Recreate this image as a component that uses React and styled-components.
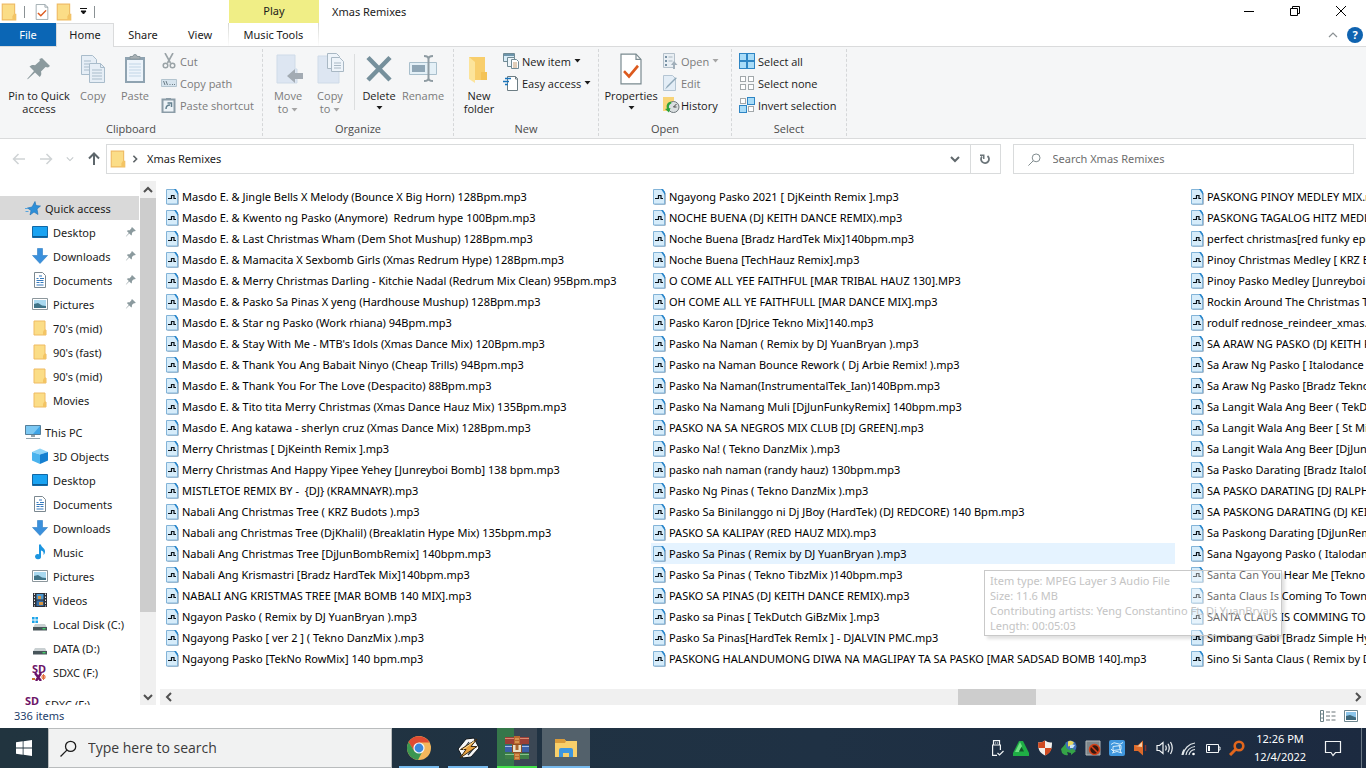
/** @format */

import React from "react";
import styled, { createGlobalStyle } from "styled-components";

const firstColumn = [
  "Masdo E. & Jingle Bells X Melody (Bounce X Big Horn) 128Bpm.mp3",
  "Masdo E. & Kwento ng Pasko (Anymore)  Redrum hype 100Bpm.mp3",
  "Masdo E. & Last Christmas Wham (Dem Shot Mushup) 128Bpm.mp3",
  "Masdo E. & Mamacita X Sexbomb Girls (Xmas Redrum Hype) 128Bpm.mp3",
  "Masdo E. & Merry Christmas Darling - Kitchie Nadal (Redrum Mix Clean) 95Bpm.mp3",
  "Masdo E. & Pasko Sa Pinas X yeng (Hardhouse Mushup) 128Bpm.mp3",
  "Masdo E. & Star ng Pasko (Work rhiana) 94Bpm.mp3",
  "Masdo E. & Stay With Me - MTB's Idols (Xmas Dance Mix) 120Bpm.mp3",
  "Masdo E. & Thank You Ang Babait Ninyo (Cheap Trills) 94Bpm.mp3",
  "Masdo E. & Thank You For The Love (Despacito) 88Bpm.mp3",
  "Masdo E. & Tito tita Merry Christmas (Xmas Dance Hauz Mix) 135Bpm.mp3",
  "Masdo E. Ang katawa - sherlyn cruz (Xmas Dance Mix) 128Bpm.mp3",
  "Merry Christmas [ DjKeinth Remix ].mp3",
  "Merry Christmas And Happy Yipee Yehey [Junreyboi Bomb] 138 bpm.mp3",
  "MISTLETOE REMIX BY -  {DJ} (KRAMNAYR).mp3",
  "Nabali Ang Christmas Tree ( KRZ Budots ).mp3",
  "Nabali ang Christmas Tree (DjKhalil) (Breaklatin Hype Mix) 135bpm.mp3",
  "Nabali Ang Christmas Tree [DjJunBombRemix] 140bpm.mp3",
  "Nabali Ang Krismastri [Bradz HardTek Mix]140bpm.mp3",
  "NABALI ANG KRISTMAS TREE [MAR BOMB 140 MIX].mp3",
  "Ngayon Pasko ( Remix by DJ YuanBryan ).mp3",
  "Ngayong Pasko [ ver 2 ] ( Tekno DanzMix ).mp3",
  "Ngayong Pasko [TekNo RowMix] 140 bpm.mp3",
];

const secondColumn = [
  "Ngayong Pasko 2021 [ DjKeinth Remix ].mp3",
  "NOCHE BUENA (DJ KEITH DANCE REMIX).mp3",
  "Noche Buena [Bradz HardTek Mix]140bpm.mp3",
  "Noche Buena [TechHauz Remix].mp3",
  "O COME ALL YEE FAITHFUL [MAR TRIBAL HAUZ 130].MP3",
  "OH COME ALL YE FAITHFULL [MAR DANCE MIX].mp3",
  "Pasko Karon [DJrice Tekno Mix]140.mp3",
  "Pasko Na Naman ( Remix by DJ YuanBryan ).mp3",
  "Pasko na Naman Bounce Rework ( Dj Arbie Remix! ).mp3",
  "Pasko Na Naman(InstrumentalTek_Ian)140Bpm.mp3",
  "Pasko Na Namang Muli [DjJunFunkyRemix] 140bpm.mp3",
  "PASKO NA SA NEGROS MIX CLUB [DJ GREEN].mp3",
  "Pasko Na! ( Tekno DanzMix ).mp3",
  "pasko nah naman (randy hauz) 130bpm.mp3",
  "Pasko Ng Pinas ( Tekno DanzMix ).mp3",
  "Pasko Sa Binilanggo ni Dj JBoy (HardTek) (DJ REDCORE) 140 Bpm.mp3",
  "PASKO SA KALIPAY (RED HAUZ MIX).mp3",
  "Pasko Sa Pinas ( Remix by DJ YuanBryan ).mp3",
  "Pasko Sa Pinas ( Tekno TibzMix )140bpm.mp3",
  "PASKO SA PINAS (DJ KEITH DANCE REMIX).mp3",
  "Pasko sa Pinas [ TekDutch GiBzMix ].mp3",
  "Pasko Sa Pinas[HardTek RemIx ] - DJALVIN PMC.mp3",
  "PASKONG HALANDUMONG DIWA NA MAGLIPAY TA SA PASKO [MAR SADSAD BOMB 140].mp3",
];

const thirdColumn = [
  "PASKONG PINOY MEDLEY MIX.mp3",
  "PASKONG TAGALOG HITZ MEDLEY.mp3",
  "perfect christmas[red funky epic].mp3",
  "Pinoy Christmas Medley [ KRZ Budots ].mp3",
  "Pinoy Pasko Medley [Junreyboi Bomb].mp3",
  "Rockin Around The Christmas Tree.mp3",
  "rodulf rednose_reindeer_xmas.mp3",
  "SA ARAW NG PASKO (DJ KEITH REMIX).mp3",
  "Sa Araw Ng Pasko [ Italodance ].mp3",
  "Sa Araw Ng Pasko [Bradz Tekno].mp3",
  "Sa Langit Wala Ang Beer ( TekDutch ).mp3",
  "Sa Langit Wala Ang Beer [ St Mix ].mp3",
  "Sa Langit Wala Ang Beer [DjJunRemix].mp3",
  "Sa Pasko Darating [Bradz ItaloDance].mp3",
  "SA PASKO DARATING [DJ RALPH].mp3",
  "SA PASKONG DARATING (DJ KEITH).mp3",
  "Sa Paskong Darating [DjJunRemix].mp3",
  "Sana Ngayong Pasko ( Italodance ).mp3",
  "Santa Can You Hear Me [Tekno Mix].mp3",
  "Santa Claus Is Coming To Town.mp3",
  "SANTA CLAUS IS COMMING TO TOWN.mp3",
  "Simbang Gabi [Bradz Simple Hype].mp3",
  "Sino Si Santa Claus ( Remix by DJ YuanBryan ).mp3",
];

const HOVERED_FILE = secondColumn[17];

/* ---------- icons ---------- */

const FolderIcon = ({ size = 16 }) => (
  <svg width={size} height={size} viewBox="0 0 16 16">
    <path d="M2 1h11v9h1v5H2z" fill="#fbdd87" stroke="#efbb62" />
    <path d="M12 10h2v5h-3v-3z" fill="#f3c464" />
  </svg>
);

const CheckDocIcon = ({ width = 16, height = 16 }) => (
  <svg width={width} height={height} viewBox="0 0 24 30" preserveAspectRatio="none">
    <path d="M2 1h15l5 5v23H2z" fill="#fff" stroke="#7a8a90" strokeWidth="1.2" />
    <path d="M17 1v5h5" fill="none" stroke="#7a8a90" strokeWidth="1.2" />
    <path d="M5 17l5 5 9-10" fill="none" stroke="#dc5a1e" strokeWidth="2.6" />
  </svg>
);

const CaretIcon = ({ color = "#1b1b1b" }) => (
  <svg width="7" height="4" viewBox="0 0 7 4">
    <path d="M0.5 0h6L3.5 3.5z" fill={color} />
  </svg>
);

const PinIcon = ({ size = 32, color = "#8b9a9e" }) => (
  <svg width={size} height={size} viewBox="0 0 32 32">
    <path
      d="M19 5l8 8-2 1.500-2.500-.5-4.500 4.500c.7 2.500.2 4-1.200 5.500L12 19.500 5 26l-.8.300.3-.8L11 18 6.500 13.500c1.500-1.600 3.300-2 5.500-1.200L16.800 8l-.3-2z"
      fill={color}
    />
  </svg>
);

const CopyIcon = () => (
  <svg width="32" height="32" viewBox="0 0 32 32">
    <g fill="#e6eef6" stroke="#a9bccb">
      <path d="M4.500 2.500h11l4 4v15h-15z" />
      <path d="M12.500 10.500h11l4 4v15h-15z" />
      <path d="M23.500 10.500v4h4M7 8h7M7 11h5M7 14h5M7 17h5M15 17h10M15 20h10M15 23h10M15 26h10" fill="none" />
    </g>
  </svg>
);

const PasteIcon = () => (
  <svg width="32" height="32" viewBox="0 0 32 32">
    <path d="M6 4h20v26H6z" fill="#8fa3b1" />
    <path d="M8 7h16v21H8z" fill="#edf4fb" />
    <path d="M11 6V3.500h3a2 2 0 0 1 4 0h3V6z" fill="#a7afb3" stroke="#8b989e" />
    <path d="M10 11h12M10 14h12M10 17h12M10 20h12M10 23h12" stroke="#c1d5e6" />
  </svg>
);

const CutIcon = () => (
  <svg width="16" height="16" viewBox="0 0 16 16" fill="none" stroke="#9aa3a7">
    <path d="M4 0l5.500 10M12 0L6.500 10" strokeWidth="1.600" />
    <circle cx="4.500" cy="12.500" r="2.300" strokeWidth="1.500" />
    <circle cx="11.500" cy="12.500" r="2.300" strokeWidth="1.500" />
  </svg>
);

const CopyPathIcon = () => (
  <svg width="16" height="16" viewBox="0 0 16 16">
    <path d="M.5 4.500h15v7H.5z" fill="#d6e4ee" stroke="#b3c4cf" />
    <path d="M2.500 6l1.500 4M5 6l1.500 4M8.500 9.500h1M11 9.500h1M13 9.500h1" stroke="#6b7c86" />
  </svg>
);

const PasteShortcutIcon = () => (
  <svg width="16" height="16" viewBox="0 0 16 16">
    <path d="M1.500 2.500h12v13h-12z" fill="#edf3f7" stroke="#8b9ca7" strokeWidth="2" />
    <path d="M5 1h5v2H5z" fill="#8b9ca7" />
    <path d="M5 12c0-3 1.500-4 4-4M6.500 6h4v4" fill="none" stroke="#63808f" strokeWidth="1.500" />
  </svg>
);

const MoveToIcon = () => (
  <svg width="32" height="32" viewBox="0 0 32 32">
    <path d="M5 2h18v14h2v14H5z" fill="#dde6f2" stroke="#cfdbe8" />
    <path d="M15 23l8-7v4h8v6h-8v4z" fill="#a3abb3" />
  </svg>
);

const CopyToIcon = () => (
  <svg width="32" height="32" viewBox="0 0 32 32">
    <path d="M4 3h19v14h2v13H4z" fill="#dde6f2" stroke="#cfdbe8" />
    <g fill="#eef4fa" stroke="#a9b8c4">
      <path d="M13.500.5h9l3 3v12h-12z" />
      <path d="M17.500 4.500h8l4 4v10h-12z" />
      <path d="M20 10h7M20 12.500h7M20 15h7" />
    </g>
  </svg>
);

const DeleteIcon = () => (
  <svg width="32" height="32" viewBox="0 0 32 32">
    <path d="M5 4.500L27 27M27 4.500L5 27" stroke="#76909c" strokeWidth="4.500" />
  </svg>
);

const RenameIcon = () => (
  <svg width="32" height="32" viewBox="0 0 32 32" fill="none">
    <path d="M2.500 9.500h27v12h-27z" fill="#e4f0f7" stroke="#a9bfcc" />
    <path d="M5 12h13v7H5z" fill="#8fa6b6" />
    <path d="M17 3c3 0 4.500 1 4.500 3v19c0 2-1.500 3-4.500 3M26 3c-3 0-4.500 1-4.500 3M21.500 25c0 2 1.500 3 4.500 3" stroke="#8f9ca3" strokeWidth="2" />
  </svg>
);

const NewFolderIcon = () => (
  <svg width="32" height="32" viewBox="0 0 32 32">
    <path d="M6 4h16v15h2v8H12L6 23z" fill="#f8ce6c" />
    <path d="M6 4l6 5v21l-6-4z" fill="#fce49b" />
    <path d="M18 19h6v8h-6z" fill="#f4c357" />
  </svg>
);

const NewItemIcon = () => (
  <svg width="16" height="16" viewBox="0 0 16 16">
    <path d="M.5.500h11v8H.5z" fill="#d8ecf7" stroke="#708a95" />
    <path d="M1 1h10v2H1z" fill="#6d95ab" />
    <path d="M4.500 4.500h7v9h-7z" fill="#eef6fa" stroke="#708a95" />
    <path d="M8.500 6.500h5l2 2v7h-7z" fill="#fff" stroke="#708a95" />
    <path d="M10 10h4M10 12h4M10 14h4" stroke="#b2844f" strokeWidth=".8" />
  </svg>
);

const EasyAccessIcon = () => (
  <svg width="16" height="16" viewBox="0 0 16 16">
    <path d="M4.500 1.500h8l2 2v12h-10z" fill="#fff" stroke="#6c7d84" />
    <path d="M12.500 1.500v2.500h2" fill="none" stroke="#6c7d84" />
    <path d="M2 3.500h6M0 6.500h6M2 9.500h3" stroke="#1874bb" strokeWidth="1.500" />
  </svg>
);

const OpenIcon = () => (
  <svg width="16" height="16" viewBox="0 0 16 16">
    <path d="M1.500.500h11v14h-11z" fill="#e9eff4" stroke="#b4c0ca" />
    <path d="M3 3h2v2H3zM3 7h2v2H3zM3 11h2v2H3z" fill="#7992a5" />
    <path d="M6.500 4h4M6.500 8h4" stroke="#a9b6c0" />
    <path d="M11 16v-4H9l3-4 3.500 4H13v4z" fill="#a1afba" />
  </svg>
);

const EditIcon = () => (
  <svg width="16" height="16" viewBox="0 0 16 16">
    <path d="M1.500.500h9l3 3v12h-12z" fill="#e3edf6" stroke="#b4c5d3" />
    <path d="M15 3L6 12l-3 2.500L5 11l8.500-8.500z" fill="#8ea7b8" />
  </svg>
);

const HistoryIcon = () => (
  <svg width="18" height="18" viewBox="0 0 18 18">
    <path d="M1 1h11v14H1z" fill="#f8d478" />
    <circle cx="11.500" cy="11" r="5.500" fill="#d9dee0" stroke="#6d777b" />
    <path d="M11.500 11l3-3M11.500 11h3" stroke="#444" />
    <path d="M9 5.500c-4 1-5 4-4 7l-2 .5 4 3.500 1.500-4.500-1.500.3c-.5-2 0-4 2.500-5z" fill="#2ba33c" />
  </svg>
);

const tiles = [
  [0.5, 0.5],
  [8.5, 0.5],
  [0.5, 8.5],
  [8.5, 8.5],
];

const SelectIcon = ({ filled }) => (
  <svg width="16" height="16" viewBox="0 0 16 16">
    {tiles.map(([x, y], i) =>
      filled.includes(i) ? (
        <rect key={i} x={x} y={y} width="7" height="7" fill="#a9dcf8" stroke="#2e85c4" />
      ) : (
        <rect key={i} x={x + 1} y={y + 1} width="5" height="5" fill="#fff" stroke="#a2a8ab" />
      )
    )}
  </svg>
);

const ChevronIcon = ({ turn = 0, size = 10, color = "#505050", weight = 2 }) => (
  <svg width={size} height={size} viewBox="0 0 10 10">
    <path
      d="M1 3l4 4 4-4"
      transform={`rotate(${turn} 5 5)`}
      fill="none"
      stroke={color}
      strokeWidth={weight}
    />
  </svg>
);

const ArrowIcon = ({ turn = 0, color, weight = 1.5 }) => (
  <svg width="14" height="14" viewBox="0 0 14 14">
    <path
      d="M13 7H2M6.500 2L1.500 7l5 5"
      transform={`rotate(${turn} 7 7)`}
      fill="none"
      stroke={color}
      strokeWidth={weight}
    />
  </svg>
);

const RefreshIcon = () => (
  <svg width="12" height="12" viewBox="0 0 12 12">
    <path d="M3 3.500a4 4 0 1 0 5.500-.5" fill="none" stroke="#6b7479" strokeWidth="1.800" />
    <path d="M1 1.500h4.500V6H4V3H1z" fill="#6b7479" />
  </svg>
);

const MagnifierIcon = ({ size, color, weight }) => (
  <svg width={size} height={size} viewBox="0 0 16 16" fill="none" stroke={color} strokeWidth={weight}>
    <circle cx="10" cy="6" r="4.800" />
    <path d="M6.500 9.500L.5 15.500" />
  </svg>
);

const Mp3Icon = () => (
  <svg width="13" height="16" viewBox="0 0 13 16">
    <path d="M1.500 1.500h8.500l2.500 2.500v11.500h-11z" fill="#5c7891" />
    <path d="M.5.500h9l2 2.500v12H.5z" fill="#d6ecfa" stroke="#83b4d8" />
    <path d="M8 0h2l2 3v3z" fill="#2b87cc" />
    <path d="M2 9.500h3.500v-3H8v3h2" fill="none" stroke="#0a1218" strokeWidth="1.200" />
  </svg>
);

const StarIcon = () => (
  <svg width="16" height="16" viewBox="0 0 16 16">
    <path d="M10 1.500l1 4 4.500.5-3.500 3 1 5.500-4-2.500-4 3 1-4.500-3.500-2.500 4.500-1z" fill="#2d8fd8" stroke="#1c6fb4" strokeWidth=".6" />
    <path d="M0 8.500h3M.5 11.500h3" stroke="#56a5de" />
  </svg>
);

const DesktopIcon = () => (
  <svg width="16" height="16" viewBox="0 0 16 16">
    <path d="M.5 2.500h15v11H.5z" fill="#19a3f2" stroke="#1168a6" />
    <path d="M1 12.500h14" stroke="#0f5c93" />
  </svg>
);

const DownloadsIcon = () => (
  <svg width="16" height="16" viewBox="0 0 16 16">
    <path d="M5.500.500h5v7h5L8 15.500.500 7.500h5z" fill="#3a90dc" stroke="#2c7dc4" strokeWidth=".6" />
  </svg>
);

const DocumentsIcon = () => (
  <svg width="16" height="16" viewBox="0 0 16 16">
    <path d="M2.500.500h8l3 3v12h-11z" fill="#fff" stroke="#7b8890" />
    <path d="M7 4h3M4.500 6.500h2M8 6.500h4M4.500 8.500h7M4.500 10.500h3M8.500 10.500h3M4.500 13h7" stroke="#3579bd" />
  </svg>
);

const PicturesIcon = () => (
  <svg width="16" height="16" viewBox="0 0 16 16">
    <path d="M.5 2.500h15v11H.5z" fill="#fff" stroke="#8c979c" />
    <path d="M2 4h12v8H2z" fill="#a9d9f0" />
    <path d="M2 8l4-1 4 2.500 4 .5v2H2z" fill="#3f7488" />
  </svg>
);

const ComputerIcon = () => (
  <svg width="16" height="16" viewBox="0 0 16 16">
    <path d="M.5 1.500h15v9H.5z" fill="#3fa4e6" stroke="#557e99" />
    <path d="M1 2h14L8 10H1z" fill="#7cc8f3" />
    <path d="M6 11h4v2H6z" fill="#93a4ad" />
    <path d="M1 14.500h14" stroke="#93a4ad" />
  </svg>
);

const CubeIcon = () => (
  <svg width="16" height="16" viewBox="0 0 16 16">
    <path d="M0 4l8-3.500L16 4 8 6.500z" fill="#8fd5f8" />
    <path d="M0 4l8 2.500V16l-8-3.500z" fill="#4ab3ee" />
    <path d="M16 4L8 6.500V16l8-3.500z" fill="#157fd0" />
  </svg>
);

const MusicIcon = () => (
  <svg width="16" height="16" viewBox="0 0 16 16">
    <path d="M7 .5h2c0 3 4 3.500 4 7 0 1.500-.5 2.500-1.500 3.500.5-3-.5-4-2.500-4.500v6a3 2.600 0 1 1-2-2.300z" fill="#1b95e0" />
  </svg>
);

const VideosIcon = () => (
  <svg width="16" height="16" viewBox="0 0 16 16">
    <path d="M1 1h14v14H1z" fill="#2c2f36" />
    <path d="M2.500 1.500v13M13.500 1.500v13" stroke="#e6e9ec" strokeDasharray="1.500 1.500" />
    <path d="M4.500 2h7v5.500h-7z" fill="#4d97cf" />
    <path d="M4.500 8.500h7V14h-7z" fill="#376ea8" />
    <path d="M6 4h3v3H6zM7 10h4v3H7z" fill="#d99743" />
  </svg>
);

const DriveIcon = ({ system }) => (
  <svg width="16" height="16" viewBox="0 0 16 16">
    <path d="M3 8h10l2 3.500H1z" fill="#c9d0d2" />
    <path d="M1 11h14v3.500H1z" fill="#48555a" />
    <path d="M10.500 12.700h3" stroke="#43d86a" strokeWidth="1.300" />
    {system && <path d="M0 1h2.600v2.600H0zM3.400 1H6v2.600H3.400zM0 4.400h2.600V7H0zM3.400 4.400H6V7H3.400z" fill="#1ea5ea" />}
  </svg>
);

const WindowsIcon = () => (
  <svg width="16" height="16" viewBox="0 0 16 16">
    <path d="M0 2.200L6.700 1.300v6.300H0zM7.500 1.200L16 0v7.600H7.500zM0 8.400h6.700v6.300L0 13.800zM7.500 8.400H16V16l-8.500-1.200z" fill="#fff" />
  </svg>
);

const ChromeIcon = () => (
  <svg width="24" height="24" viewBox="0 0 24 24">
    <circle cx="12" cy="12" r="12" fill="#f3b65c" />
    <path d="M1.600 6A12 12 0 0 1 22.400 6.500H12L7 15z" fill="#df4b32" />
    <path d="M1.600 6A12 12 0 0 0 11 24l5-9.500-8.500 1z" fill="#3b9650" />
    <circle cx="12" cy="12" r="5.600" fill="#f4f7fa" />
    <circle cx="12" cy="12" r="4.400" fill="#3b87dd" />
  </svg>
);

const WinampIcon = () => (
  <svg width="24" height="24" viewBox="0 0 24 24">
    <path d="M2 13L10 3l8-1 5 10-8 9-8 1z" fill="#f7f7f7" stroke="#10161a" />
    <path d="M7 14l6-8M12 19l6-7" stroke="#27313a" strokeWidth="1.200" />
    <path d="M21 3l-6 7.500h6L4 22l6-8.500H4.500z" fill="#e8a23f" stroke="#3b2810" />
    <path d="M18 5.500l-9 6.500-2 1.500" stroke="#fbe0a4" fill="none" />
  </svg>
);

const WinrarIcon = () => (
  <svg width="24" height="24" viewBox="0 0 24 24">
    <path d="M0 1h24v7H0z" fill="#9a3f37" />
    <path d="M0 9h24v7H0z" fill="#3b5fa8" />
    <path d="M0 17h24v6H0z" fill="#3e7f48" />
    <path d="M0 2.500h24" stroke="#d98a72" />
    <path d="M0 10.500h24" stroke="#a6bfe2" />
    <path d="M0 18.500h24" stroke="#86c38c" />
    <path d="M9 0h6v24H9z" fill="#b9692e" />
    <path d="M10 3h4M10 6h4M10 19h4M10 22h4" stroke="#f2bd72" />
    <path d="M7.500 8.500h9v8h-9z" fill="#eadfc6" stroke="#8f4d22" />
    <path d="M10.500 9v5h3V9z" fill="#a9642d" />
  </svg>
);

const ExplorerIcon = () => (
  <svg width="24" height="24" viewBox="0 0 24 24">
    <path d="M1 3h9l2 2h11v16H1z" fill="#f8cf6a" />
    <path d="M1 3h9l2 2-1 2H1z" fill="#d99b3a" />
    <path d="M5 21v-7q0-2 2-2h10q2 0 2 2v7h-4v-4H9v4z" fill="#3d96df" />
  </svg>
);

const UsbIcon = () => (
  <svg width="16" height="16" viewBox="0 0 16 16" fill="none" stroke="#f0f3f5" strokeWidth="1.200">
    <path d="M4.500 5V.600h6V5M8 15.400H3.600V5h7.800v5M6.500 2.500v1M8.500 2.500v1M8.500 13l2 2 4-4" />
  </svg>
);

const TriangleIcon = () => (
  <svg width="16" height="16" viewBox="0 0 16 16">
    <path d="M6 1h4l6 12v3H0v-3z" fill="#1fae45" />
    <path d="M7 2L2 12h4l3-6" fill="#6fe083" />
    <path d="M8.500 7l2.500 4.500H6z" fill="#14532a" />
  </svg>
);

const ShieldIcon = () => (
  <svg width="16" height="16" viewBox="0 0 16 16">
    <path d="M1 2.500q4 .5 7-2 3 2.500 7 2c0 6-1 10-7 13C2 12.500 1 8.500 1 2.500z" fill="#f2efec" />
    <path d="M1 2.500q4 .5 7-2V8H1.300zM8 8h6.700C14 11.500 12 14 8 15.500z" fill="#cf4a22" />
  </svg>
);

const IdmIcon = () => (
  <svg width="16" height="16" viewBox="0 0 16 16">
    <circle cx="9.500" cy="6.500" r="6" fill="#3f6fb8" />
    <path d="M7 1.500q3-2 6 1l-2 3-4 1z" fill="#e8d75f" />
    <path d="M9 5q3-1 5 0l-2 3H9z" fill="#c9e2f4" />
    <path d="M5 3.500L0 9l1 4q3 3 6 2l-1-3 4 1v2l5-4-5-3v2Q4 10 5 3.500z" fill="#35a447" />
  </svg>
);

const BlockedIcon = () => (
  <svg width="16" height="16" viewBox="0 0 16 16">
    <path d="M1 1h14v14H1z" fill="#7d8589" stroke="#b2b8ba" />
    <circle cx="9.500" cy="9.500" r="5" fill="#35180f" stroke="#d9431a" strokeWidth="1.600" />
    <path d="M6 6l7 7" stroke="#d9431a" strokeWidth="1.600" />
  </svg>
);

const BluePcIcon = () => (
  <svg width="16" height="16" viewBox="0 0 16 16">
    <rect width="16" height="16" rx="2" fill="#3f96dd" />
    <path d="M2 4.500q3-3 6-1t6-1M4 6.500l8-1v4l-8 1zM3 13q5-3 10 0M10 5l2 8M2 9l3 3" stroke="#d5edfb" fill="none" />
  </svg>
);

const SpeakerColorIcon = () => (
  <svg width="16" height="16" viewBox="0 0 16 16">
    <path d="M1 5h4l5-4.500v15L5 11H1z" fill="#dd6a2a" />
    <path d="M2 6h3l4-4v5z" fill="#f8cfa6" />
    <path d="M12.500 5v6" stroke="#85302a" strokeWidth="1.500" />
  </svg>
);

const VolumeIcon = () => (
  <svg width="18" height="16" viewBox="0 0 18 16" fill="none" stroke="#f0f3f5" strokeWidth="1.200">
    <path d="M1 5.500h2.500L7 2.500v11l-3.500-3H1zM9.500 5.500q1.500 2.500 0 5M12 3.800q2.500 4.200 0 8.400M14.500 2q3.500 6 0 12" />
  </svg>
);

const WifiIcon = () => (
  <svg width="16" height="16" viewBox="0 0 16 16" fill="none" stroke="#dfe5e8" strokeWidth="1.200">
    <path d="M2 15A14 14 0 0 1 14 3M5 15A10.500 10.500 0 0 1 14 6.500M8 15a7 7 0 0 1 6-5.500M3 9.500a14 14 0 0 0-2 5.500" />
    <circle cx="12.500" cy="14" r="1.300" fill="#fff" stroke="none" />
  </svg>
);

const BatteryIcon = () => (
  <svg width="16" height="16" viewBox="0 0 16 16">
    <path d="M1.500 4.500h12v8h-12zM13.500 7h1.500v3h-1.500" fill="none" stroke="#f0f3f5" />
    <path d="M3 6h2v5H3z" fill="#fff" />
  </svg>
);

const OrangeKeyIcon = () => (
  <svg width="16" height="16" viewBox="0 0 16 16" fill="none" stroke="#e1661d">
    <circle cx="10" cy="6" r="4.300" strokeWidth="2.600" />
    <path d="M7 9l-6 6" strokeWidth="3" />
  </svg>
);

const NotificationIcon = () => (
  <svg width="18" height="18" viewBox="0 0 18 18" fill="none" stroke="#f0f3f5" strokeWidth="1.200">
    <path d="M1.500 2.500h15v11h-5L9 16.500 7 13.500H1.500z" />
  </svg>
);

/* ---------- page pieces ---------- */

const bigButton = (Icon, label, width, options = {}) => ({ Icon, label, width, ...options });

const treeItems = [
  { label: "Desktop", Icon: DesktopIcon, pinned: true },
  { label: "Downloads", Icon: DownloadsIcon, pinned: true },
  { label: "Documents", Icon: DocumentsIcon, pinned: true },
  { label: "Pictures", Icon: PicturesIcon, pinned: true },
  { label: "70's (mid)", Icon: FolderIcon },
  { label: "90's (fast)", Icon: FolderIcon },
  { label: "90's (mid)", Icon: FolderIcon },
  { label: "Movies", Icon: FolderIcon },
];

const SdIcon = () => (
  <SdMark aria-hidden="true">
    SD
    <svg width="14" height="8" viewBox="0 0 14 8">
      <path d="M3 0l6 8M9 0L4 8" stroke="#6c1467" strokeWidth="2.400" />
      <path d="M11.500 1v6M9 4h5M10 2l3 4M13 2l-3 4" stroke="#e2622d" strokeWidth=".9" />
      <path d="M0 6h3" stroke="#c9772c" strokeWidth="2" />
    </svg>
  </SdMark>
);

const pcItems = [
  { label: "3D Objects", Icon: CubeIcon },
  { label: "Desktop", Icon: DesktopIcon },
  { label: "Documents", Icon: DocumentsIcon },
  { label: "Downloads", Icon: DownloadsIcon },
  { label: "Music", Icon: MusicIcon },
  { label: "Pictures", Icon: PicturesIcon },
  { label: "Videos", Icon: VideosIcon },
  { label: "Local Disk (C:)", Icon: () => <DriveIcon system /> },
  { label: "DATA (D:)", Icon: DriveIcon },
  { label: "SDXC (F:)", Icon: SdIcon },
];

const trayIcons = [
  ["Safely remove hardware", UsbIcon],
  ["Monitor", TriangleIcon],
  ["Security", ShieldIcon],
  ["Downloads", IdmIcon],
  ["Blocked device", BlockedIcon],
  ["Display", BluePcIcon],
  ["Audio manager", SpeakerColorIcon],
  ["Volume", VolumeIcon],
  ["Network", WifiIcon],
  ["Battery", BatteryIcon],
  ["Key", OrangeKeyIcon],
];

const taskApps = [
  { name: "Chrome", Icon: ChromeIcon },
  { name: "Winamp", Icon: WinampIcon },
  { name: "WinRAR", Icon: WinrarIcon, progress: true },
  { name: "File Explorer", Icon: ExplorerIcon, active: true },
];

const LargeButton = ({ item }) => (
  <LargeAction $width={item.width} disabled={item.muted}>
    <item.Icon {...item.iconProps} />
    <span>{item.label}</span>
    {item.second ? (
      <span>
        {item.second} {item.caret && <CaretIcon color="#a5a5a5" />}
      </span>
    ) : (
      item.caret && (
        <CaretLine>
          <CaretIcon />
        </CaretLine>
      )
    )}
  </LargeAction>
);

const SmallButton = ({ icon, children, muted, caret }) => (
  <SmallAction disabled={muted}>
    <IconSlot>{icon}</IconSlot>
    {children}
    {caret && <CaretIcon color={muted ? "#a5a5a5" : "#1b1b1b"} />}
  </SmallAction>
);

const RibbonGroup = ({ name, width, children }) => (
  <Group $width={width}>
    <GroupBody>{children}</GroupBody>
    <GroupName>{name}</GroupName>
  </Group>
);

const TreeRow = ({ item, level = 2 }) => (
  <TreeLink href="#" $level={level} $selected={item.selected}>
    <item.Icon />
    <span>{item.label}</span>
    {item.pinned && <PinIcon size={14} />}
  </TreeLink>
);

const FileColumn = ({ files, width }) => (
  <Column $width={width}>
    {files.map((name) => (
      <FileRow key={name} $hovered={name === HOVERED_FILE}>
        <Mp3Icon />
        <span>{name}</span>
      </FileRow>
    ))}
  </Column>
);

const App = () => (
  <>
    <GlobalStyle />
    <Page>
      <TitleBar>
        <QuickBar>
          <FolderIcon size={18} />
          <QuickLine />
          <CheckDocIcon width={14} height={16} />
          <FolderIcon size={18} />
          <svg width="9" height="7" viewBox="0 0 9 7">
            <path d="M1 .500h7M2 3h5L4.500 6z" fill="#111" stroke="#111" />
          </svg>
          <QuickLine />
        </QuickBar>
        <ContextTab>Play</ContextTab>
        <WindowName>Xmas Remixes</WindowName>
        <WindowButtons>
          <button aria-label="Minimize">
            <svg width="10" height="10" viewBox="0 0 10 10">
              <path d="M0 5.500h10" stroke="#000" />
            </svg>
          </button>
          <button aria-label="Restore">
            <svg width="10" height="10" viewBox="0 0 10 10" fill="none" stroke="#000">
              <path d="M.5 2.500h7v7h-7zM2.500 2.500v-2h7v7h-2" />
            </svg>
          </button>
          <button aria-label="Close">
            <svg width="10" height="10" viewBox="0 0 10 10">
              <path d="M0 0l10 10M10 0L0 10" stroke="#000" />
            </svg>
          </button>
        </WindowButtons>
      </TitleBar>

      <Tabs>
        <FileTab>File</FileTab>
        <Tab $width={58} $active>
          Home
        </Tab>
        <Tab $width={58}>Share</Tab>
        <Tab $width={56}>View</Tab>
        <MusicTab>Music Tools</MusicTab>
        <TabTools>
          <PlainButton aria-label="Collapse ribbon">
            <ChevronIcon turn={180} color="#8b9194" weight={1.2} />
          </PlainButton>
          <HelpButton aria-label="Help">?</HelpButton>
        </TabTools>
      </Tabs>

      <Ribbon>
        <RibbonGroup name="Clipboard" width={263}>
          <LargeButton item={bigButton(PinIcon, "Pin to Quick", 70, { second: "access" })} />
          <LargeButton item={bigButton(CopyIcon, "Copy", 38, { muted: true })} />
          <LargeButton item={bigButton(PasteIcon, "Paste", 46, { muted: true })} />
          <SmallStack>
            <SmallButton muted icon={<CutIcon />}>
              Cut
            </SmallButton>
            <SmallButton muted icon={<CopyPathIcon />}>
              Copy path
            </SmallButton>
            <SmallButton muted icon={<PasteShortcutIcon />}>
              Paste shortcut
            </SmallButton>
          </SmallStack>
        </RibbonGroup>
        <RibbonGroup name="Organize" width={191}>
          <LargeButton item={bigButton(MoveToIcon, "Move", 42, { second: "to", caret: true, muted: true })} />
          <LargeButton item={bigButton(CopyToIcon, "Copy", 42, { second: "to", caret: true, muted: true })} />
          <InnerLine />
          <LargeButton item={bigButton(DeleteIcon, "Delete", 42, { caret: true })} />
          <LargeButton item={bigButton(RenameIcon, "Rename", 46, { muted: true })} />
        </RibbonGroup>
        <RibbonGroup name="New" width={145}>
          <LargeButton item={bigButton(NewFolderIcon, "New", 42, { second: "folder" })} />
          <SmallStack>
            <SmallButton icon={<NewItemIcon />} caret>
              New item
            </SmallButton>
            <SmallButton icon={<EasyAccessIcon />} caret>
              Easy access
            </SmallButton>
          </SmallStack>
        </RibbonGroup>
        <RibbonGroup name="Open" width={133}>
          <LargeButton
            item={bigButton(CheckDocIcon, "Properties", 56, { caret: true, iconProps: { width: 24, height: 32 } })}
          />
          <SmallStack>
            <SmallButton muted icon={<OpenIcon />} caret>
              Open
            </SmallButton>
            <SmallButton muted icon={<EditIcon />}>
              Edit
            </SmallButton>
            <SmallButton icon={<HistoryIcon />}>History</SmallButton>
          </SmallStack>
        </RibbonGroup>
        <RibbonGroup name="Select" width={115}>
          <SmallStack>
            <SmallButton icon={<SelectIcon filled={[0, 1, 2, 3]} />}>Select all</SmallButton>
            <SmallButton icon={<SelectIcon filled={[]} />}>Select none</SmallButton>
            <SmallButton icon={<SelectIcon filled={[1, 2]} />}>Invert selection</SmallButton>
          </SmallStack>
        </RibbonGroup>
      </Ribbon>

      <AddressRow>
        <NavButtons>
          <PlainButton aria-label="Back">
            <ArrowIcon color="#cfd3d5" />
          </PlainButton>
          <PlainButton aria-label="Forward">
            <ArrowIcon turn={180} color="#cfd3d5" />
          </PlainButton>
          <PlainButton aria-label="Recent locations">
            <ChevronIcon size={8} color="#c3c8ca" weight={1.3} />
          </PlainButton>
          <PlainButton aria-label="Up">
            <ArrowIcon turn={90} color="#5d666b" weight={2} />
          </PlainButton>
        </NavButtons>
        <AddressBox>
          <FolderIcon size={18} />
          <ChevronIcon turn={-90} size={8} color="#5c6266" />
          <AddressName>Xmas Remixes</AddressName>
          <PlainButton aria-label="Previous locations">
            <ChevronIcon color="#60686c" />
          </PlainButton>
          <RefreshButton aria-label="Refresh">
            <RefreshIcon />
          </RefreshButton>
        </AddressBox>
        <SearchBox>
          <MagnifierIcon size={13} color="#7d898c" weight={1.2} />
          <input type="text" aria-label="Search Xmas Remixes" placeholder="Search Xmas Remixes" />
        </SearchBox>
      </AddressRow>

      <Main>
        <Sidebar>
          <Tree>
            <TreeRow level={1} item={{ label: "Quick access", Icon: StarIcon, selected: true }} />
            {treeItems.map((item) => (
              <TreeRow key={item.label} item={item} />
            ))}
            <TreeGap />
            <TreeRow level={1} item={{ label: "This PC", Icon: ComputerIcon }} />
            {pcItems.map((item) => (
              <TreeRow key={item.label} item={item} />
            ))}
            <TreeGap />
            <TreeRow level={1} item={{ label: "SDXC (F:)", Icon: SdIcon }} />
          </Tree>
          <VerticalBar>
            <PlainButton aria-label="Scroll up">
              <ChevronIcon turn={180} />
            </PlainButton>
            <VerticalThumb />
            <PlainButton aria-label="Scroll down">
              <ChevronIcon />
            </PlainButton>
          </VerticalBar>
        </Sidebar>
        <FilePane>
          <Columns>
            <FileColumn files={firstColumn} width={487} />
            <FileColumn files={secondColumn} width={538} />
            <FileColumn files={thirdColumn} width={400} />
          </Columns>
          <FileTip role="tooltip">
            <p>Item type: MPEG Layer 3 Audio File</p>
            <p>Size: 11.6 MB</p>
            <p>Contributing artists: Yeng Constantino Ft. Dj YuanBryan</p>
            <p>Length: 00:05:03</p>
          </FileTip>
          <HorizontalBar>
            <PlainButton aria-label="Scroll left">
              <ChevronIcon turn={90} />
            </PlainButton>
            <HorizontalTrack>
              <HorizontalThumb />
            </HorizontalTrack>
            <PlainButton aria-label="Scroll right">
              <ChevronIcon turn={-90} />
            </PlainButton>
          </HorizontalBar>
        </FilePane>
      </Main>

      <StatusBar>
        <span>336 items</span>
        <PlainButton aria-label="Details view">
          <svg width="16" height="12" viewBox="0 0 16 12">
            <path d="M.5.500h3v11h-3z" fill="none" stroke="#6a8086" />
            <path d="M1 4h2M1 8h2" stroke="#6a8086" />
            <path d="M6 2h10M6 6h10M6 10h10" stroke="#6b7478" strokeDasharray="4 1.500" />
          </svg>
        </PlainButton>
        <PlainButton aria-label="Large icons view">
          <svg width="14" height="12" viewBox="0 0 14 12">
            <path d="M.5.500h13v11H.5z" fill="#fff" stroke="#6e8790" />
            <path d="M2 2h10v8H2z" fill="#8cc5ea" />
            <path d="M2 6l4-1 6 2.500V10H2z" fill="#3d687c" />
          </svg>
        </PlainButton>
      </StatusBar>

      <Taskbar>
        <StartButton aria-label="Start">
          <WindowsIcon />
        </StartButton>
        <TaskSearch>
          <MagnifierIcon size={17} color="#1c1c1c" weight={1.2} />
          <input type="text" aria-label="Type here to search" placeholder="Type here to search" />
        </TaskSearch>
        <TaskApps>
          {taskApps.map(({ name, Icon, active, progress }) => (
            <TaskButton key={name} aria-label={name} $active={active} $progress={progress}>
              <Icon />
            </TaskButton>
          ))}
        </TaskApps>
        <Tray>
          {trayIcons.map(([name, Icon]) => (
            <TrayButton key={name} aria-label={name}>
              <Icon />
            </TrayButton>
          ))}
          <Clock>
            <span>12:26 PM</span>
            <span>12/4/2022</span>
          </Clock>
          <NotificationButton aria-label="Notifications">
            <NotificationIcon />
          </NotificationButton>
          <ShowDesktop aria-label="Show desktop" />
        </Tray>
      </Taskbar>
    </Page>
  </>
);

export default App;

const GlobalStyle = createGlobalStyle`
  * {
    box-sizing: border-box;
  }
  body {
    margin: 0;
    background: #ffffff;
    font-family: "Noto Sans", "Open Sans", sans-serif;
    font-size: 11px;
    line-height: 13px;
    color: #1b1b1b;
  }
  button, input {
    font: inherit;
    color: inherit;
    border: none;
    padding: 0;
    background: none;
  }
  svg {
    flex: none;
    display: block;
  }
`;

const Page = styled.div`
  display: flex;
  flex-direction: column;
  height: 100vh;
  overflow: hidden;
`;

const TitleBar = styled.header`
  display: flex;
  flex: none;
  height: 23px;
`;

const QuickBar = styled.div`
  display: flex;
  align-items: center;
  gap: 6px;
  width: 229px;
`;

const QuickLine = styled.span`
  width: 1px;
  height: 12px;
  margin-right: 4px;
  background: #8a9194;
`;

const ContextTab = styled.button`
  width: 90px;
  padding-bottom: 3px;
  background: #f0ee86;
`;

const WindowName = styled.h1`
  margin: 0;
  padding: 5px 13px;
  flex: 1;
  font-size: 11px;
  font-weight: normal;
`;

const WindowButtons = styled.div`
  display: flex;
  button {
    display: grid;
    place-items: center;
    width: 46px;
    padding-bottom: 2px;
  }
  button:last-child {
    margin-right: 2px;
  }
`;

const Tabs = styled.nav`
  display: flex;
  flex: none;
  height: 24px;
  border-bottom: 1px solid #dadbdc;
`;

const FileTab = styled.button`
  width: 56px;
  height: 23px;
  background: #0b66b5;
  color: #ffffff;
`;

const Tab = styled.button`
  width: ${({ $width }) => $width}px;
  height: ${({ $active }) => ($active ? 24 : 23)}px;
  padding-bottom: ${({ $active }) => ($active ? 2 : 0)}px;
  background: ${({ $active }) => ($active ? "#f5f6f7" : "transparent")};
  border: ${({ $active }) => ($active ? "1px solid #dadbdc" : "none")};
  border-bottom: none;
`;

const MusicTab = styled.button`
  width: 91px;
  height: 23px;
  border: 1px solid;
  border-width: 0 1px;
  border-image: linear-gradient(#d5d6d2, #ffffff) 1;
`;

const TabTools = styled.div`
  display: flex;
  align-items: center;
  gap: 9px;
  margin-left: auto;
  padding-right: 3px;
`;

const PlainButton = styled.button`
  display: grid;
  place-items: center;
  flex: none;
`;

const HelpButton = styled.button`
  width: 16px;
  height: 16px;
  border-radius: 50%;
  background: #0f63b0;
  color: #ffffff;
  font-weight: bold;
`;

const Ribbon = styled.section`
  display: flex;
  flex: none;
  height: 92px;
  background: #f5f6f7;
  border-bottom: 1px solid #dadbdc;
  font-family: "Open Sans", "Noto Sans", sans-serif;
`;

const Group = styled.div`
  display: flex;
  flex-direction: column;
  width: ${({ $width }) => $width}px;
  margin: 2px 0;
  border-right: 1px dashed #d5d7d9;
`;

const GroupBody = styled.div`
  display: flex;
  flex: 1;
  padding: 1px 4px 0;
`;

const GroupName = styled.div`
  height: 14px;
  text-align: center;
  color: #4b4b4b;
`;

const LargeAction = styled.button`
  display: flex;
  flex-direction: column;
  align-items: center;
  flex: none;
  width: ${({ $width }) => $width}px;
  padding-top: 3px;
  white-space: nowrap;
  color: ${({ disabled }) => (disabled ? "#7b7b7b" : "#1b1b1b")};
  > svg {
    margin-bottom: 4px;
  }
  span svg {
    display: inline-block;
    vertical-align: middle;
  }
`;

const CaretLine = styled.span`
  height: 10px;
  line-height: 10px;
`;

const SmallStack = styled.div`
  display: flex;
  flex-direction: column;
  align-items: flex-start;
  padding-left: 3px;
`;

const SmallAction = styled.button`
  display: flex;
  align-items: center;
  gap: 3px;
  height: 22px;
  white-space: nowrap;
  color: ${({ disabled }) => (disabled ? "#7b7b7b" : "#1b1b1b")};
`;

const IconSlot = styled.span`
  display: grid;
  place-items: center;
  width: 16px;
`;

const InnerLine = styled.span`
  width: 1px;
  height: 56px;
  margin: 4px 3px;
  background: #dcdedf;
`;

const AddressRow = styled.div`
  display: flex;
  flex: none;
  padding: 5px 12px 7px;
`;

const NavButtons = styled.div`
  display: flex;
  align-items: center;
  gap: 13px;
  width: 94px;
`;

const AddressBox = styled.div`
  display: flex;
  align-items: center;
  gap: 4px;
  flex: 1;
  height: 30px;
  padding-left: 2px;
  border: 1px solid #d9dbdc;
`;

const AddressName = styled.span`
  flex: 1;
  padding: 0 0 2px 4px;
`;

const RefreshButton = styled.button`
  display: grid;
  place-items: center;
  width: 30px;
  height: 28px;
  margin-left: 6px;
  border-left: 1px solid #d9dbdc;
`;

const SearchBox = styled.label`
  display: flex;
  align-items: center;
  gap: 12px;
  width: 25vw;
  height: 30px;
  margin-left: 12px;
  padding-left: 14px;
  border: 1px solid #d9dbdc;
  input {
    flex: 1;
    padding-bottom: 2px;
    outline: none;
  }
  input::placeholder {
    color: #6d6d6d;
    opacity: 1;
  }
`;

const Main = styled.main`
  display: flex;
  flex: 1;
  min-height: 0;
`;

const Sidebar = styled.aside`
  display: flex;
  flex: none;
  width: 156px;
`;

const Tree = styled.nav`
  flex: 1;
  padding: 15px 1px 0 0;
  overflow: hidden;
`;

const TreeLink = styled.a`
  display: flex;
  align-items: center;
  gap: ${({ $level }) => ($level === 1 ? 4 : 5)}px;
  height: 24px;
  padding: 0 1px 0 ${({ $level }) => ($level === 1 ? 25 : 32)}px;
  background: ${({ $selected }) => ($selected ? "#d9d9d9" : "transparent")};
  color: #1b1b1b;
  text-decoration: none;
  white-space: nowrap;
  > span {
    flex: 1;
  }
`;

const SdMark = styled.b`
  flex: none;
  width: 16px;
  font-size: 11px;
  line-height: 9px;
  color: #6c1467;
`;

const TreeGap = styled.div`
  height: 8px;
`;

const VerticalBar = styled.div`
  display: flex;
  flex-direction: column;
  width: 16px;
  background: #f0f0f0;
  button {
    height: 17px;
  }
`;

const VerticalThumb = styled.div`
  height: 79%;
  margin-bottom: auto;
  background: #cdcdcd;
`;

const FilePane = styled.section`
  position: relative;
  display: flex;
  flex-direction: column;
  flex: 1;
  min-width: 0;
  margin-left: 4px;
`;

const Columns = styled.div`
  display: flex;
  flex: 1;
  min-height: 0;
  padding: 5px 0 0 4px;
  overflow: hidden;
`;

const Column = styled.ul`
  flex: none;
  width: ${({ $width }) => $width}px;
  margin: 0;
  padding: 0;
  list-style: none;
`;

const FileRow = styled.li`
  display: flex;
  align-items: center;
  gap: 3px;
  height: 21px;
  margin-right: 14px;
  padding-left: 2px;
  color: #000000;
  background: ${({ $hovered }) => ($hovered ? "#e5f3ff" : "transparent")};
  white-space: pre;
`;

const FileTip = styled.div`
  position: absolute;
  top: 389px;
  left: 824px;
  padding: 2px 5px;
  border: 1px solid #c9c9c9;
  background: rgba(255, 255, 255, 0.4);
  box-shadow: 3px 3px 3px rgba(0, 0, 0, 0.12);
  color: #c4c4c4;
  p {
    margin: 0;
    line-height: 15px;
    white-space: nowrap;
  }
`;

const HorizontalBar = styled.div`
  display: flex;
  flex: none;
  height: 16px;
  background: #f0f0f0;
  button {
    width: 17px;
  }
`;

const HorizontalTrack = styled.div`
  flex: 1;
`;

const HorizontalThumb = styled.div`
  width: 78px;
  height: 16px;
  margin-left: 66.6%;
  background: #cdcdcd;
`;

const StatusBar = styled.footer`
  display: flex;
  align-items: center;
  flex: none;
  gap: 8px;
  height: 23px;
  padding: 0 8px 2px 14px;
  color: #24406b;
  span {
    flex: 1;
  }
`;

const Taskbar = styled.footer`
  display: flex;
  flex: none;
  height: 40px;
  background: linear-gradient(90deg, #21343f, #1f3144 60%, #1c2a40);
  color: #ffffff;
`;

const StartButton = styled.button`
  display: grid;
  place-items: center;
  width: 48px;
`;

const TaskSearch = styled.label`
  display: flex;
  align-items: center;
  gap: 11px;
  width: 344px;
  padding-left: 11px;
  border: 1px solid #b9bcbd;
  background: #f1f2f2;
  font-family: "Open Sans", "Noto Sans", sans-serif;
  font-size: 14px;
  line-height: 20px;
  input {
    flex: 1;
    outline: none;
  }
  input::placeholder {
    color: #3b3b3b;
    opacity: 1;
  }
`;

const TaskApps = styled.div`
  display: flex;
  gap: 1px;
  margin-left: 3px;
`;

const TaskButton = styled.button`
  display: grid;
  grid-template: 40px / 100%;
  place-items: center;
  width: 48px;
  height: 40px;
  padding: ${({ $active }) => ($active ? "0" : "0 4px")};
  background: ${({ $active, $progress }) =>
    $progress
      ? "linear-gradient(90deg, #35774a 42%, #3b4754 42%) content-box"
      : $active
      ? "#53616b"
      : "transparent"};
  &::after {
    content: "";
    grid-area: 1 / 1;
    align-self: end;
    width: 100%;
    height: 2px;
    background: ${({ $progress }) => ($progress ? "#43e04b" : "#76b9ed")};
  }
  > svg {
    grid-area: 1 / 1;
  }
`;

const Tray = styled.div`
  display: flex;
  align-items: center;
  margin-left: auto;
`;

const TrayButton = styled.button`
  display: grid;
  place-items: center;
  width: 24px;
  height: 40px;
`;

const Clock = styled.div`
  display: flex;
  flex-direction: column;
  align-items: center;
  width: 62px;
  line-height: 18px;
`;

const NotificationButton = styled.button`
  display: grid;
  place-items: center;
  width: 44px;
  height: 40px;
  margin-right: 6px;
`;

const ShowDesktop = styled.button`
  width: 5px;
  height: 40px;
  border-left: 1px solid #6b7885;
`;
